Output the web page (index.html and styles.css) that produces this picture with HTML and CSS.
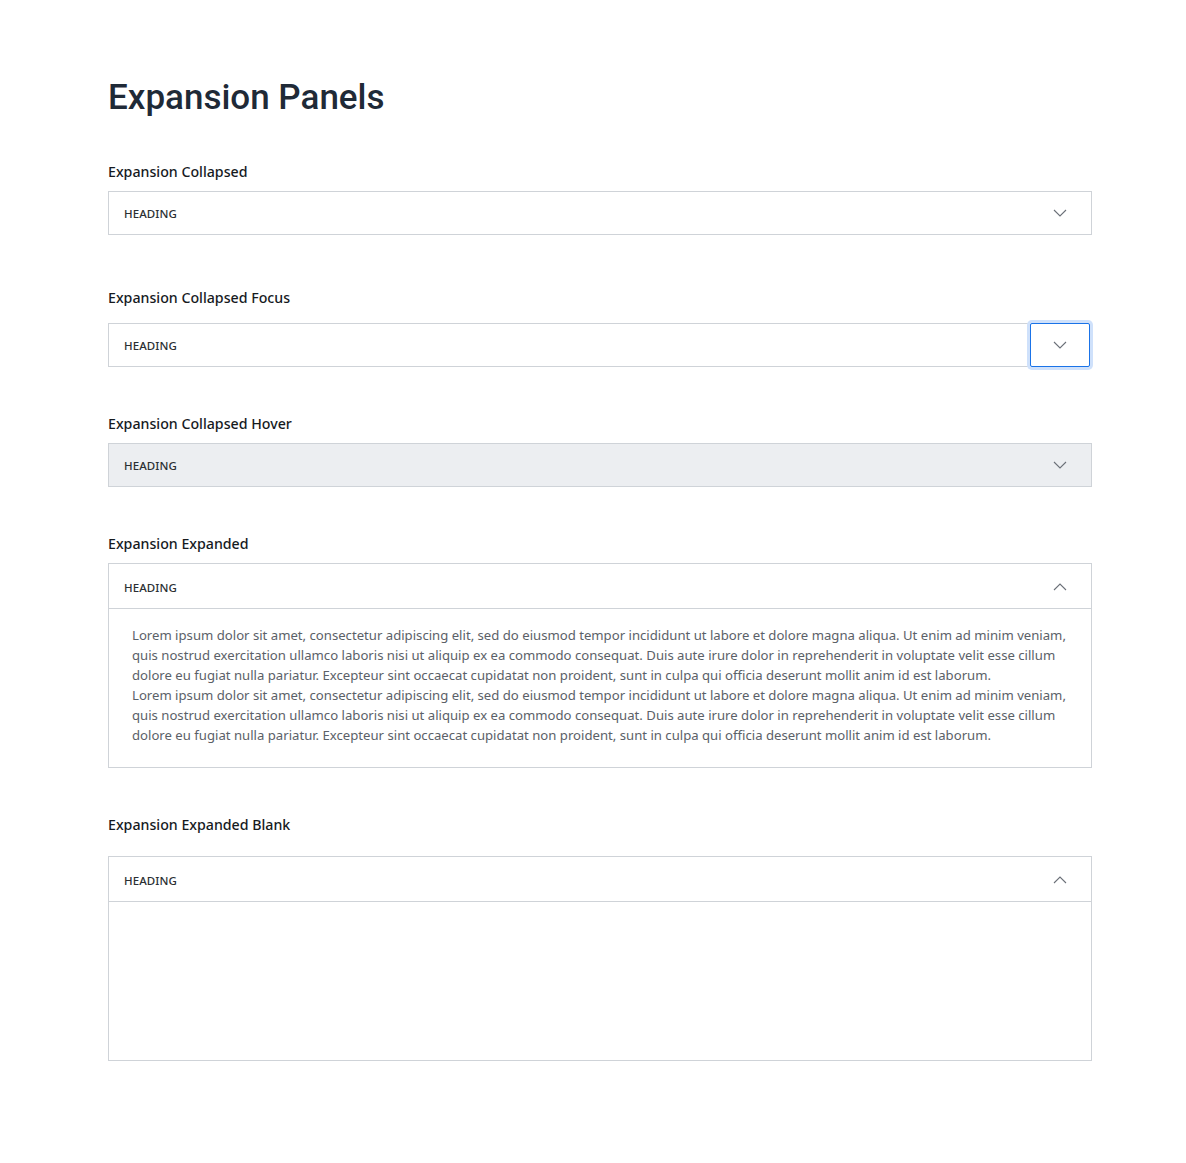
FILE: index.html
```html
<!DOCTYPE html>
<html lang="en">
<head>
<meta charset="utf-8">
<title>Expansion Panels</title>
<link rel="stylesheet" href="styles.css">
</head>
<body>
<main class="page">
  <h1 class="title">Expansion Panels</h1>

  <section class="section s1">
    <h2 class="label">Expansion Collapsed</h2>
    <div class="panel">
      <div class="header">
        <span class="heading">HEADING</span>
        <span class="toggle"><svg width="14" height="8" viewBox="0 0 14 8"><path d="M1 1l6 6 6-6" fill="none" stroke="#6b7078" stroke-width="1.1"/></svg></span>
      </div>
    </div>
  </section>

  <section class="section s2">
    <h2 class="label label-focus">Expansion Collapsed Focus</h2>
    <div class="panel">
      <div class="header">
        <span class="heading">HEADING</span>
        <span class="toggle focus"><svg width="14" height="8" viewBox="0 0 14 8"><path d="M1 1l6 6 6-6" fill="none" stroke="#6b7078" stroke-width="1.1"/></svg></span>
      </div>
    </div>
  </section>

  <section class="section s3">
    <h2 class="label">Expansion Collapsed Hover</h2>
    <div class="panel hover">
      <div class="header">
        <span class="heading">HEADING</span>
        <span class="toggle"><svg width="14" height="8" viewBox="0 0 14 8"><path d="M1 1l6 6 6-6" fill="none" stroke="#6b7078" stroke-width="1.1"/></svg></span>
      </div>
    </div>
  </section>

  <section class="section s4">
    <h2 class="label">Expansion Expanded</h2>
    <div class="panel">
      <div class="header open">
        <span class="heading">HEADING</span>
        <span class="toggle"><svg width="14" height="8" viewBox="0 0 14 8"><path d="M1 7l6-6 6 6" fill="none" stroke="#6b7078" stroke-width="1.1"/></svg></span>
      </div>
      <div class="body">
        <p>Lorem ipsum dolor sit amet, consectetur adipiscing elit, sed do eiusmod tempor incididunt ut labore et dolore magna aliqua. Ut enim ad minim veniam, quis nostrud exercitation ullamco laboris nisi ut aliquip ex ea commodo consequat. Duis aute irure dolor in reprehenderit in voluptate velit esse cillum dolore eu fugiat nulla pariatur. Excepteur sint occaecat cupidatat non proident, sunt in culpa qui officia deserunt mollit anim id est laborum.</p>
        <p>Lorem ipsum dolor sit amet, consectetur adipiscing elit, sed do eiusmod tempor incididunt ut labore et dolore magna aliqua. Ut enim ad minim veniam, quis nostrud exercitation ullamco laboris nisi ut aliquip ex ea commodo consequat. Duis aute irure dolor in reprehenderit in voluptate velit esse cillum dolore eu fugiat nulla pariatur. Excepteur sint occaecat cupidatat non proident, sunt in culpa qui officia deserunt mollit anim id est laborum.</p>
      </div>
    </div>
  </section>

  <section class="section s5">
    <h2 class="label label-blank">Expansion Expanded Blank</h2>
    <div class="panel">
      <div class="header open">
        <span class="heading">HEADING</span>
        <span class="toggle"><svg width="14" height="8" viewBox="0 0 14 8"><path d="M1 7l6-6 6 6" fill="none" stroke="#6b7078" stroke-width="1.1"/></svg></span>
      </div>
      <div class="body blank"></div>
    </div>
  </section>
</main>
</body>
</html>
```

FILE: styles.css
```css
* { box-sizing: border-box; }
html, body { margin: 0; padding: 0; background: #fff; }
body { font-family: "Noto Sans", "Open Sans", sans-serif; color: #1b1f24; }

.page {
  width: 984px;
  margin: 0 0 0 108px;
  padding-top: 76px;
}

.title {
  font-family: Roboto, "Noto Sans", sans-serif;
  font-weight: 500;
  font-size: 35px;
  line-height: 44px;
  color: #1f2a37;
  margin: 0 0 42px 0;
  letter-spacing: 0;
}

.section { margin-bottom: 47px; }
.s1 { margin-bottom: 53px; }

.label {
  font-size: 14.2px;
  font-weight: 500;
  line-height: 20px;
  margin: 0 0 9px 0;
  color: #161a1e;
}
.label-focus { margin-bottom: 15px; }
.label-blank { margin-bottom: 21px; }

.panel {
  border: 1px solid #cfd3d8;
  background: #fff;
}
.panel.hover { background: #eceef1; }

.header {
  display: flex;
  align-items: center;
  justify-content: space-between;
  height: 42px;
  padding-left: 15px;
}
.header.open {
  height: 45px;
  padding-top: 2px;
  border-bottom: 1px solid #cfd3d8;
}

.heading {
  font-size: 11.5px;
  font-weight: 500;
  letter-spacing: 0.1px;
  color: #2b2f33;
}

.toggle {
  width: 60px;
  height: 42px;
  display: flex;
  align-items: center;
  justify-content: center;
  margin-right: 1px;
}
.header.open .toggle { height: 40px; }
.toggle.focus {
  height: 44px;
  margin: -1px 1px -1px 0;
  border: 1px solid #1a73e8;
  border-radius: 2px;
  box-shadow: 0 0 0 3px #cfe1fb;
  background: #fff;
}

.body {
  padding: 16px 24px 22px 23px;
  font-size: 13.15px;
  line-height: 20px;
  color: #5b6168;
}
.body p { margin: 0; }
.body.blank { height: 158px; padding: 0; }
```
